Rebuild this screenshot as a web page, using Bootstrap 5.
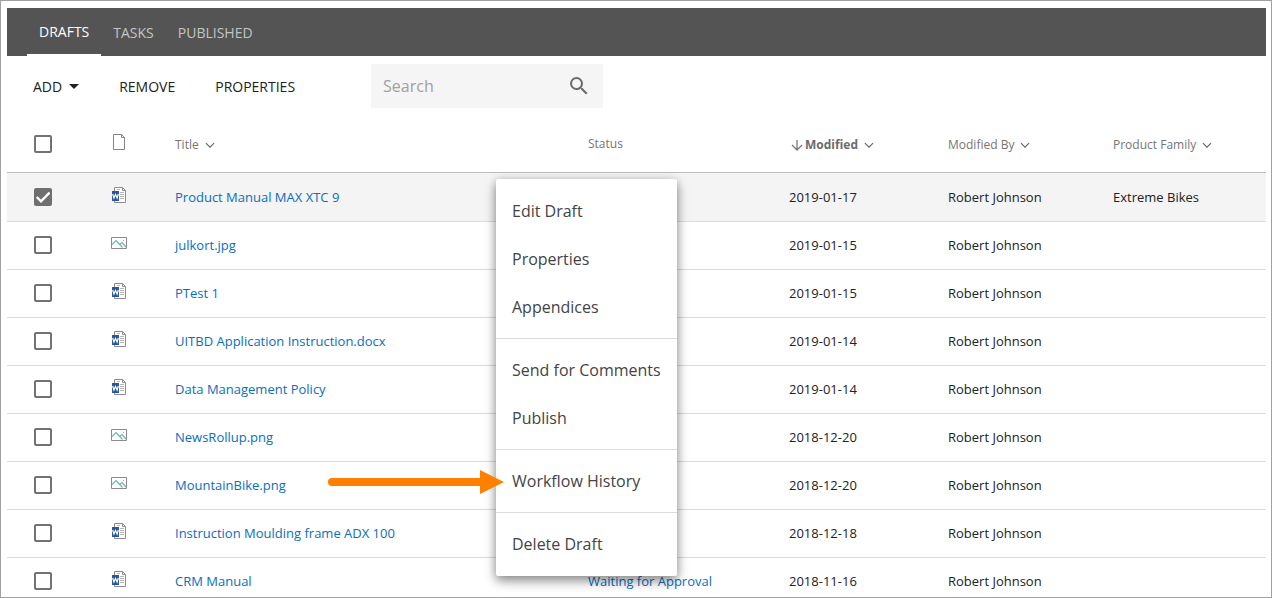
<!DOCTYPE html>
<html lang="en">
<head>
<meta charset="utf-8">
<meta name="viewport" content="width=device-width, initial-scale=1">
<title>Drafts</title>
<link href="https://cdn.jsdelivr.net/npm/bootstrap@5.3.0/dist/css/bootstrap.min.css" rel="stylesheet">
<style>
  body { font-family: "Open Sans", sans-serif; font-size: 13px; color: #212121; background: #fff; }
  .frame { height: 100vh; overflow: hidden; border: 1px solid #a0a0a0; padding: 7px 5px 0 6px; }
  .topbar { background: #545454; padding: 0 20px; min-height: 48px; }
  .topbar .nav-link { color: #c4c4c4; font-size: 14px; line-height: 20px; padding: 15px 12px 13px; border: 0; }
  .topbar .nav-link.active { color: #fff; padding: 14px 12px 12px; border-bottom: 2px solid #fff; }
  .toolbar { min-height: 60px; padding-left: 14px; margin-bottom: -1px; }
  .toolbar .btn { font-size: 14px; line-height: 20px; color: #212121; border: 0; border-radius: 0; padding: 8px 12px 6px; }
  .toolbar .dropdown-toggle::after { border-top-width: 5px; border-left-width: 5px; border-right-width: 5px; margin-left: 7px; vertical-align: 3px; }
  .searchbox { width: 232px; height: 44px; margin-left: 64px; background: #f5f5f5; }
  .searchbox .form-control { background: transparent; border: 0; font-size: 16px; padding: 0 12px; height: 44px; }
  .searchbox .form-control::placeholder { color: #a0a0a0; opacity: 1; }
  .searchbox .btn { padding: 0 12px; color: #6b6b6b; }
  .docs { table-layout: fixed; margin: 0; color: #212121; }
  .docs > :not(caption) > * > * { padding: 0; height: 48px; vertical-align: middle; border-bottom: 1px solid #dcdcdc; background: transparent; color: inherit; box-shadow: none; }
  .docs > thead > tr > th { height: 57px; padding-top: 2px; font-size: 12px; font-weight: 400; line-height: 18px; color: #757575; border-bottom-color: #bdbdbd; }
  .docs > tbody > tr.picked > td { height: 49px; background: #f4f4f4; }
  .docs > tbody > tr > td { line-height: 20px; }
  .docs > * > tr > :first-child { padding-left: 27px; }
  .docs a { color: #0a6ebd; text-decoration: none; }
  .docs svg { display: block; }
  .docs .kind { width: 16px; height: 16px; margin-top: -4px; margin-left: -1px; }
  .docs .form-check-input { display: block; width: 18px; height: 18px; margin: 0; border: 2px solid #737373; border-radius: 2px; }
  .docs .form-check-input:checked { background-color: #6f6f6f; border-color: #6f6f6f; background-size: 18px; background-position: center;
    background-image: url("data:image/svg+xml,%3Csvg xmlns='http://www.w3.org/2000/svg' viewBox='0 0 18 18'%3E%3Cpath fill='none' stroke='%23fff' stroke-width='2.4' d='M2.7 9 7 13.3 15.6 4.7'/%3E%3C/svg%3E"); }
  .docs .sortlabel { display: flex; align-items: center; gap: 6px; color: #757575; padding-top: 2px; }
  .docs .sorted .sortlabel { font-weight: 700; color: #6b6b6b; }
  .c-check { width: 105px; } .c-kind { width: 63px; } .c-status { width: 201px; }
  .c-date { width: 159px; } .c-by { width: 165px; } .c-family { width: 153px; }
  .actions { top: 64px; left: 489px; width: 181px; padding: 8px 0; border: 0; border-radius: 2px; box-shadow: 0 5px 12px rgba(0,0,0,.4), 0 1px 8px rgba(0,0,0,.16); }
  .actions .dropdown-item { font-size: 16px; line-height: 24px; padding: 12px 16px; color: #444; }
  .actions .dropdown-divider { margin: 7px 0; border-color: #dcdcdc; opacity: 1; }
  .pointer { top: 355px; left: 321px; z-index: 1010; pointer-events: none; }
</style>
</head>
<body>
<svg class="d-none" xmlns="http://www.w3.org/2000/svg">
  <symbol id="word" viewBox="0 0 16 16">
    <path d="M3.500.5h8l3 3v12h-11z" fill="#fff" stroke="#8b8b8b"/>
    <path d="M11.500.5v3h3" fill="none" stroke="#8b8b8b"/>
    <path d="M6 2.500h3M9 5.500h4M9 7.500h4M9 9.500h4M9 11.500h4" stroke="#b4b4b4"/>
    <path d="M1 4h7v10H1z" fill="#2b579a"/>
    <path d="M1.700 7l1.200 4 1.600-3.500L6.100 11l1.200-4" fill="none" stroke="#fff" stroke-width="1.200"/>
  </symbol>
  <symbol id="image" viewBox="0 0 16 16">
    <path d="M.5 2.500h15v11H.5z" fill="#fff" stroke="#8b8b8b"/>
    <path d="M1 9.500l4-4 6.500 7M8.500 9.500l2.500-2 4 4.500" fill="none" stroke="#72b5aa" stroke-width="1.200"/>
    <path d="M12 5h1v1h-1z" fill="#d9a36a"/>
  </symbol>
  <symbol id="page" viewBox="0 0 16 16">
    <path d="M2.500.5h8l3 3v12h-11zM10.500.5v3h3" fill="none" stroke="#858585"/>
  </symbol>
  <symbol id="chev" viewBox="0 0 8 6"><path d="M.5 1 4 4.500 7.500 1" fill="none" stroke="#666" stroke-width="1"/></symbol>
</svg>
<div class="frame">
  <nav class="topbar nav" aria-label="Views">
    <a class="nav-link active" href="#" aria-current="page">DRAFTS</a>
    <a class="nav-link" href="#">TASKS</a>
    <a class="nav-link" href="#">PUBLISHED</a>
  </nav>
  <div class="toolbar d-flex align-items-center">
    <button class="btn dropdown-toggle" type="button">ADD</button>
    <button class="btn ms-3" type="button">REMOVE</button>
    <button class="btn ms-3" type="button">PROPERTIES</button>
    <form class="searchbox d-flex align-items-center" role="search">
      <input class="form-control" type="text" placeholder="Search" aria-label="Search">
      <button class="btn" type="button" aria-label="Run search">
        <svg class="d-block" width="24" height="24" viewBox="0 0 24 24" fill="currentColor"><path d="M15.500 14h-.79l-.28-.27A6.470 6.470 0 0 0 16 9.500 6.500 6.500 0 1 0 9.500 16c1.610 0 3.090-.59 4.230-1.570l.27.28v.79l5 4.990L20.490 19l-4.990-5zm-6 0C7.010 14 5 11.990 5 9.500S7.010 5 9.500 5 14 7.010 14 9.500 11.990 14 9.500 14z"/></svg>
      </button>
    </form>
  </div>
  <div class="position-relative">
    <table class="table docs">
      <colgroup><col class="c-check"><col class="c-kind"><col><col class="c-status"><col class="c-date"><col class="c-by"><col class="c-family"></colgroup>
      <thead>
        <tr>
          <th><input class="form-check-input" type="checkbox" aria-label="Select all"></th>
          <th><svg class="kind" role="img" aria-label="Type"><use href="#page"/></svg></th>
          <th><a class="sortlabel" href="#">Title <svg width="10" height="7"><use href="#chev"/></svg></a></th>
          <th>Status</th>
          <th class="sorted"><a class="sortlabel" href="#"><span class="d-flex align-items-center"><svg width="16" height="12" viewBox="0 0 16 12"><path d="M8 1v9.500M3 6l5 5 5-5" fill="none" stroke="#777" stroke-width="1.300"/></svg>Modified</span> <svg width="10" height="7"><use href="#chev"/></svg></a></th>
          <th><a class="sortlabel" href="#">Modified By <svg width="10" height="7"><use href="#chev"/></svg></a></th>
          <th><a class="sortlabel" href="#">Product Family <svg width="10" height="7"><use href="#chev"/></svg></a></th>
        </tr>
      </thead>
      <tbody>
        <tr class="picked"><td><input class="form-check-input" type="checkbox" checked aria-label="Select Product Manual MAX XTC 9"></td><td><svg class="kind"><use href="#word"/></svg></td><td><a href="#">Product Manual MAX XTC 9</a></td><td></td><td>2019-01-17</td><td>Robert Johnson</td><td>Extreme Bikes</td></tr>
        <tr><td><input class="form-check-input" type="checkbox" aria-label="Select julkort.jpg"></td><td><svg class="kind"><use href="#image"/></svg></td><td><a href="#">julkort.jpg</a></td><td></td><td>2019-01-15</td><td>Robert Johnson</td><td></td></tr>
        <tr><td><input class="form-check-input" type="checkbox" aria-label="Select PTest 1"></td><td><svg class="kind"><use href="#word"/></svg></td><td><a href="#">PTest 1</a></td><td></td><td>2019-01-15</td><td>Robert Johnson</td><td></td></tr>
        <tr><td><input class="form-check-input" type="checkbox" aria-label="Select UITBD Application Instruction.docx"></td><td><svg class="kind"><use href="#word"/></svg></td><td><a href="#">UITBD Application Instruction.docx</a></td><td></td><td>2019-01-14</td><td>Robert Johnson</td><td></td></tr>
        <tr><td><input class="form-check-input" type="checkbox" aria-label="Select Data Management Policy"></td><td><svg class="kind"><use href="#word"/></svg></td><td><a href="#">Data Management Policy</a></td><td></td><td>2019-01-14</td><td>Robert Johnson</td><td></td></tr>
        <tr><td><input class="form-check-input" type="checkbox" aria-label="Select NewsRollup.png"></td><td><svg class="kind"><use href="#image"/></svg></td><td><a href="#">NewsRollup.png</a></td><td></td><td>2018-12-20</td><td>Robert Johnson</td><td></td></tr>
        <tr><td><input class="form-check-input" type="checkbox" aria-label="Select MountainBike.png"></td><td><svg class="kind"><use href="#image"/></svg></td><td><a href="#">MountainBike.png</a></td><td></td><td>2018-12-20</td><td>Robert Johnson</td><td></td></tr>
        <tr><td><input class="form-check-input" type="checkbox" aria-label="Select Instruction Moulding frame ADX 100"></td><td><svg class="kind"><use href="#word"/></svg></td><td><a href="#">Instruction Moulding frame ADX 100</a></td><td></td><td>2018-12-18</td><td>Robert Johnson</td><td></td></tr>
        <tr><td><input class="form-check-input" type="checkbox" aria-label="Select CRM Manual"></td><td><svg class="kind"><use href="#word"/></svg></td><td><a href="#">CRM Manual</a></td><td><a href="#">Waiting for Approval</a></td><td>2018-11-16</td><td>Robert Johnson</td><td></td></tr>
      </tbody>
    </table>
    <div class="dropdown-menu show actions">
      <button class="dropdown-item" type="button">Edit Draft</button>
      <button class="dropdown-item" type="button">Properties</button>
      <button class="dropdown-item" type="button">Appendices</button>
      <hr class="dropdown-divider">
      <button class="dropdown-item" type="button">Send for Comments</button>
      <button class="dropdown-item" type="button">Publish</button>
      <hr class="dropdown-divider">
      <button class="dropdown-item" type="button">Workflow History</button>
      <hr class="dropdown-divider">
      <button class="dropdown-item" type="button">Delete Draft</button>
    </div>
    <svg class="pointer position-absolute" width="176" height="24" viewBox="0 0 176 24" aria-hidden="true"><path d="M4 12h152" stroke="#ff8000" stroke-width="8" stroke-linecap="round"/><path d="M152 0l24 12-24 12z" fill="#ff8000"/></svg>
  </div>
</div>
<script src="https://cdn.jsdelivr.net/npm/bootstrap@5.3.0/dist/js/bootstrap.bundle.min.js"></script>
</body>
</html>
